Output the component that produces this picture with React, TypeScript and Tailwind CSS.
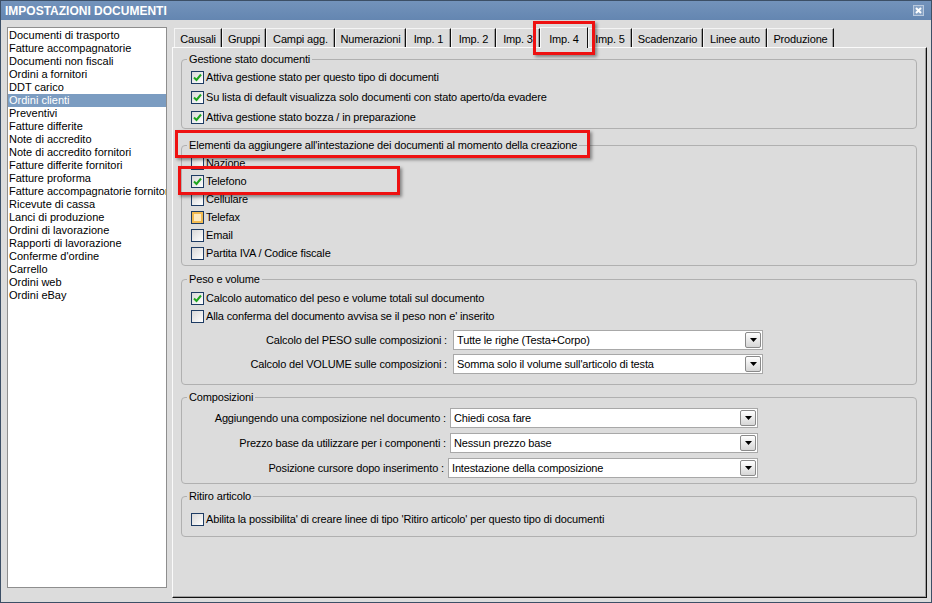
import type { ReactNode } from "react";

const LIST = [
  "Documenti di trasporto",
  "Fatture accompagnatorie",
  "Documenti non fiscali",
  "Ordini a fornitori",
  "DDT carico",
  "Ordini clienti",
  "Preventivi",
  "Fatture differite",
  "Note di accredito",
  "Note di accredito fornitori",
  "Fatture differite fornitori",
  "Fatture proforma",
  "Fatture accompagnatorie fornitori",
  "Ricevute di cassa",
  "Lanci di produzione",
  "Ordini di lavorazione",
  "Rapporti di lavorazione",
  "Conferme d'ordine",
  "Carrello",
  "Ordini web",
  "Ordini eBay",
];

const TABS = [
  { label: "Causali", w: "w-[48px]" },
  { label: "Gruppi", w: "w-[44px]" },
  { label: "Campi agg.", w: "w-[69px]" },
  { label: "Numerazioni", w: "w-[71px]" },
  { label: "Imp. 1", w: "w-[45px]" },
  { label: "Imp. 2", w: "w-[45px]" },
  { label: "Imp. 3", w: "w-[44px]" },
  { label: "Imp. 4", w: "w-[48px]", active: true },
  { label: "Imp. 5", w: "w-[44px]" },
  { label: "Scadenzario", w: "w-[71px]" },
  { label: "Linee auto", w: "w-[64px]" },
  { label: "Produzione", w: "w-[67px]" },
];

function Check({ checked, hover }: { checked?: boolean; hover?: boolean }) {
  return (
    <span
      className={
        hover
          ? "w-[13px] h-[13px] shrink-0 border border-[#1d3b63] bg-[#fdeac0] shadow-[inset_0_0_0_2px_#f2bb52] flex items-center justify-center"
          : "w-[13px] h-[13px] shrink-0 border border-[#1d3b63] bg-gradient-to-br from-[#d8d8d8] to-white flex items-center justify-center"
      }
    >
      {checked && (
        <svg width="11" height="11" viewBox="0 0 11 11">
          <path d="M2 5.5 L4.5 8 L9 2.5" fill="none" stroke="#1fa51f" strokeWidth="2" />
        </svg>
      )}
    </span>
  );
}

function CheckRow({
  label,
  checked,
  hover,
  h = "h-[20px]",
}: {
  label: string;
  checked?: boolean;
  hover?: boolean;
  h?: string;
}) {
  return (
    <div className={"flex items-center gap-[2px] whitespace-nowrap " + h}>
      <Check checked={checked} hover={hover} />
      <span>{label}</span>
    </div>
  );
}

function Select({ value, className }: { value: string; className: string }) {
  return (
    <div
      className={
        "h-[20px] bg-white border border-[#a8a8a8] flex items-center justify-between pl-[3px] pr-[1px] " +
        className
      }
    >
      <span className="whitespace-nowrap">{value}</span>
      <span className="w-[16px] h-[16px] rounded-[2px] border border-[#8a8a8a] bg-gradient-to-b from-white to-[#d6d6d6] flex items-center justify-center">
        <svg width="7" height="4" viewBox="0 0 7 4">
          <path d="M0 0 H7 L3.5 4 Z" fill="#000" />
        </svg>
      </span>
    </div>
  );
}

function Group({
  title,
  className,
  children,
}: {
  title: string;
  className: string;
  children: ReactNode;
}) {
  return (
    <fieldset className={"border border-[#b0b0b0] rounded-[4px] px-[9px] " + className}>
      <legend className="ml-[-4px] px-[2px] leading-[13px]">{title}</legend>
      {children}
    </fieldset>
  );
}

function RedBox({ className }: { className: string }) {
  return (
    <div
      className={
        "absolute border-[3px] border-[#ee1111] shadow-[2px_2px_3px_rgba(0,0,0,0.4)] pointer-events-none " +
        className
      }
    />
  );
}

export default function App() {
  return (
    <div className="relative w-[932px] h-[603px] flex flex-col bg-[#dcdcdc] border border-[#3c4f66] text-[11px] tracking-[-0.15px] text-black font-['Liberation_Sans',Arial,sans-serif] overflow-hidden">
      {/* Title bar */}
      <div className="h-[19px] shrink-0 flex items-center justify-between pl-[4px] pr-[7px] bg-gradient-to-b from-[#7393bb] to-[#6486b1] text-white">
        <span className="font-bold text-[12px] leading-none tracking-normal">IMPOSTAZIONI DOCUMENTI</span>
        <svg width="11" height="11" viewBox="0 0 11 11">
          <rect x="0.5" y="0.5" width="10" height="10" fill="#86a2c5" stroke="#b9c9dd" />
          <path d="M3 3 L8 8 M8 3 L3 8" stroke="#fff" strokeWidth="2" />
        </svg>
      </div>

      {/* Body */}
      <div className="flex-1 flex pl-[6px] pt-[7px] pb-[4px] pr-[4px] gap-[5px]">
        {/* Document type list */}
        <div className="w-[160px] h-[561px] shrink-0 bg-white border border-[#8e8e8e] pt-[1px] overflow-hidden tracking-normal">
          {LIST.map((item) => (
            <div
              key={item}
              className={
                item === "Ordini clienti"
                  ? "h-[13px] leading-[13px] pl-[1px] whitespace-nowrap overflow-hidden bg-[#7b9cc1] text-white"
                  : "h-[13px] leading-[13px] pl-[1px] whitespace-nowrap overflow-hidden"
              }
            >
              {item}
            </div>
          ))}
        </div>

        {/* Tabs + content */}
        <div className="flex-1 flex flex-col mt-[1px]">
          <div className="h-[19px] flex items-end pl-[2px]">
            {TABS.map((t) =>
              t.active ? (
                <div
                  key={t.label}
                  className={
                    "relative z-10 h-[21px] mb-[-1px] bg-[#dcdcdc] border-t border-l border-[#f8f8f8] border-r border-r-[#111] text-center pt-[3px] leading-[16px] whitespace-nowrap " +
                    t.w
                  }
                >
                  {t.label}
                </div>
              ) : (
                <div
                  key={t.label}
                  className={
                    "h-[19px] border-t border-l border-[#f4f4f4] border-r border-r-[#111] shadow-[inset_-1px_0_0_#a0a0a0] text-center pt-[2px] leading-[16px] whitespace-nowrap " +
                    t.w
                  }
                >
                  {t.label}
                </div>
              )
            )}
          </div>

          <div className="flex-1 flex flex-col border-t border-l border-[#fafafa] border-r border-b border-r-[#111] border-b-[#111] shadow-[inset_-1px_-1px_0_#a0a0a0] pt-[5px] pl-[8px] pr-[9px]">
            <Group title="Gestione stato documenti" className="pt-[1px] pb-[1px]">
              <CheckRow checked label="Attiva gestione stato per questo tipo di documenti" />
              <CheckRow checked label="Su lista di default visualizza solo documenti con stato aperto/da evadere" />
              <CheckRow checked label="Attiva gestione stato bozza / in preparazione" />
            </Group>

            <Group
              title="Elementi da aggiungere all'intestazione dei documenti al momento della creazione"
              className="mt-[10px] pt-[2px] pb-[3px]"
            >
              <CheckRow h="h-[18px]" label="Nazione" />
              <CheckRow h="h-[18px]" checked label="Telefono" />
              <CheckRow h="h-[18px]" label="Cellulare" />
              <CheckRow h="h-[18px]" hover label="Telefax" />
              <CheckRow h="h-[18px]" label="Email" />
              <CheckRow h="h-[18px]" label="Partita IVA / Codice fiscale" />
            </Group>

            <Group title="Peso e volume" className="mt-[7px] pt-[3px] pb-[10px]">
              <CheckRow h="h-[18px]" checked label="Calcolo automatico del peso e volume totali sul documento" />
              <CheckRow h="h-[18px]" label="Alla conferma del documento avvisa se il peso non e' inserito" />
              <div className="mt-[5px] flex flex-col gap-[4px]">
                <div className="flex items-center">
                  <span className="w-[256px] text-right whitespace-nowrap">Calcolo del PESO sulle composizioni :</span>
                  <Select className="ml-[6px] w-[310px]" value="Tutte le righe (Testa+Corpo)" />
                </div>
                <div className="flex items-center">
                  <span className="w-[256px] text-right whitespace-nowrap">Calcolo del VOLUME sulle composizioni :</span>
                  <Select className="ml-[6px] w-[310px]" value="Somma solo il volume sull'articolo di testa" />
                </div>
              </div>
            </Group>

            <Group title="Composizioni" className="mt-[6px] pt-[4px] pb-[5px]">
              <div className="flex flex-col gap-[5px]">
                <div className="flex items-center">
                  <span className="w-[255px] text-right whitespace-nowrap">Aggiungendo una composizione nel documento :</span>
                  <Select className="ml-[4px] w-[308px]" value="Chiedi cosa fare" />
                </div>
                <div className="flex items-center">
                  <span className="w-[255px] text-right whitespace-nowrap">Prezzo base da utilizzare per i componenti :</span>
                  <Select className="ml-[4px] w-[308px]" value="Nessun prezzo base" />
                </div>
                <div className="flex items-center">
                  <span className="w-[253px] text-right whitespace-nowrap">Posizione cursore dopo inserimento :</span>
                  <Select className="ml-[4px] w-[310px]" value="Intestazione della composizione" />
                </div>
              </div>
            </Group>

            <Group title="Ritiro articolo" className="mt-[6px] pt-[7px] pb-[8px]">
              <CheckRow
                h="h-[18px]"
                label="Abilita la possibilita' di creare linee di tipo 'Ritiro articolo' per questo tipo di documenti"
              />
            </Group>
          </div>
        </div>
      </div>

      {/* Highlight boxes drawn over the dialog */}
      <RedBox className="left-[532px] top-[20px] w-[62px] h-[34px]" />
      <RedBox className="left-[174px] top-[129px] w-[415px] h-[28px]" />
      <RedBox className="left-[177px] top-[165px] w-[222px] h-[29px]" />
    </div>
  );
}
